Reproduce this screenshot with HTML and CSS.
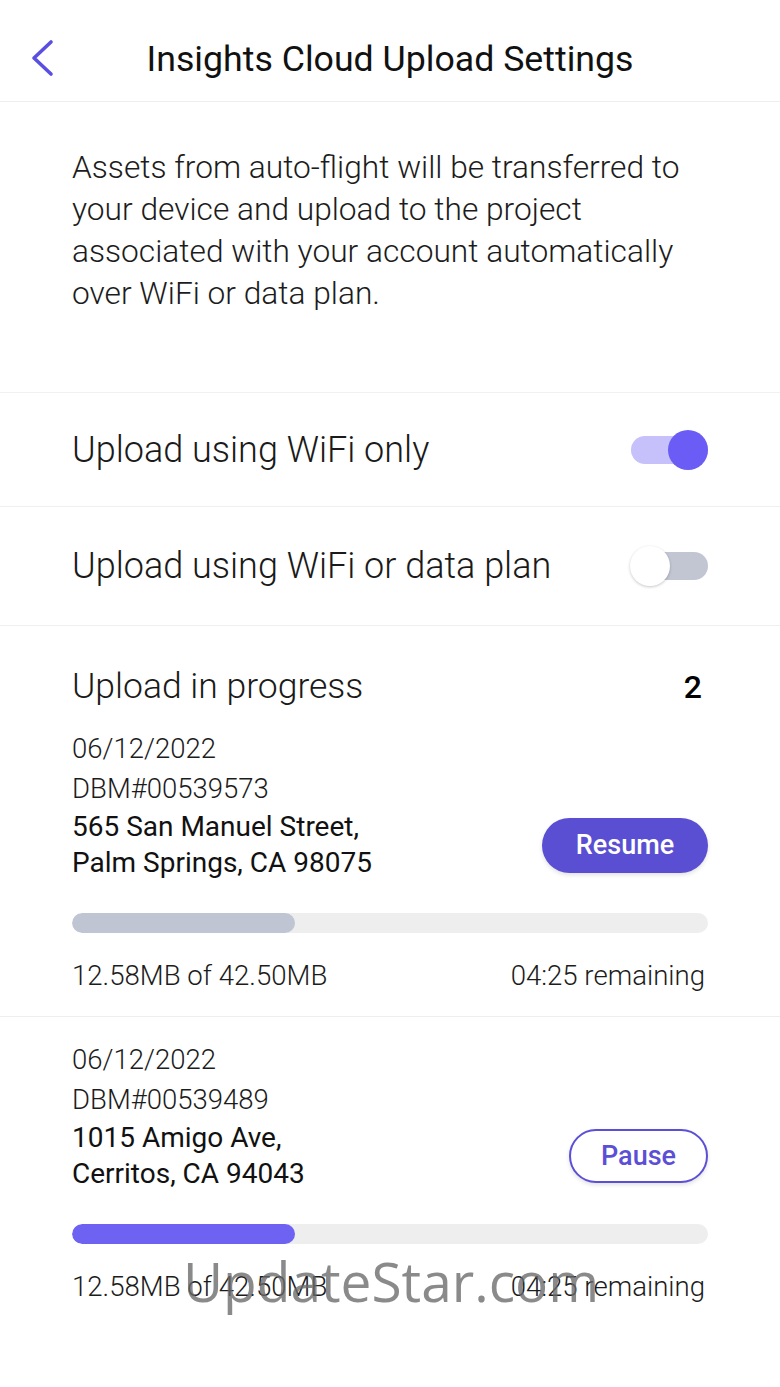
FILE: index.html
```html
<!doctype html>
<html lang="en">
<head>
    <meta charset="UTF-8">
    <title>Insights Cloud Upload Settings</title>
    <link rel="stylesheet" href="styles.css">
</head>
<body>
    <header class="topbar">
      <a class="back" href="#">
        <svg width="26" height="40" viewBox="0 0 26 40"><polyline points="21,4 4,20 21,36" fill="none" stroke="#5a4fe0" stroke-width="3.6" stroke-linecap="round" stroke-linejoin="round"/></svg>
      </a>
      <h1 class="title">Insights Cloud Upload Settings</h1>
      <span></span>
    </header>

    <section class="intro">
      <p>Assets from auto-flight will be transferred to your device and upload to the project associated with your account automatically over WiFi or data plan.</p>
    </section>

    <div class="setting-row">
      <span class="setting-label">Upload using WiFi only</span>
      <span class="switch on"><span class="knob"></span></span>
    </div>
    <div class="setting-row">
      <span class="setting-label">Upload using WiFi or data plan</span>
      <span class="switch"><span class="knob"></span></span>
    </div>

    <section class="uploads">
      <div class="uploads-head">
        <h2>Upload in progress</h2>
        <span class="count">2</span>
      </div>

      <div class="upload-item">
        <div class="meta">06/12/2022</div>
        <div class="meta">DBM#00539573</div>
        <div class="item-main">
          <div class="address">565 San Manuel Street,<br>Palm Springs, CA 98075</div>
          <button class="btn btn-solid">Resume</button>
        </div>
        <div class="bar"><div class="bar-fill paused" style="width: 35%"></div></div>
        <div class="stats"><span>12.58MB of 42.50MB</span><span>04:25 remaining</span></div>
      </div>

      <div class="upload-item">
        <div class="meta">06/12/2022</div>
        <div class="meta">DBM#00539489</div>
        <div class="item-main">
          <div class="address">1015 Amigo Ave,<br>Cerritos, CA 94043</div>
          <button class="btn btn-outline">Pause</button>
        </div>
        <div class="bar"><div class="bar-fill" style="width: 35%"></div></div>
        <div class="stats"><span>12.58MB of 42.50MB</span><span>04:25 remaining</span></div>
      </div>
    </section>

    <div class="watermark">UpdateStar.com</div>
</body>
</html>
```

FILE: styles.css
```css
body {
  margin: 0;
  background: #fff;
  color: #1a1a1a;
  font-family: Roboto, "Noto Sans", sans-serif;
  position: relative;
  min-height: 1387px;
}

/* header */
.topbar {
  display: grid;
  grid-template-columns: 1fr auto 1fr;
  align-items: start;
  height: 63px;
  padding-top: 38px;
  border-bottom: 1px solid #eeeeee;
}
.back {
  display: block;
  width: 26px;
  height: 40px;
  margin-left: 30px;
}
.back svg {
  display: block;
}
.title {
  margin: 0;
  font-size: 35.7px;
  font-weight: 400;
  line-height: 42px;
  color: #111;
}

/* intro text */
.intro {
  padding: 45px 72px 77px;
  border-bottom: 1px solid #f1f1f1;
}
.intro p {
  margin: 0;
  font-size: 31.7px;
  font-weight: 300;
  line-height: 42px;
  color: #1c1c1c;
}

/* toggles */
.setting-row {
  display: flex;
  align-items: center;
  justify-content: space-between;
  height: 113px;
  padding: 0 72px;
  border-bottom: 1px solid #efefef;
}
.setting-row + .setting-row {
  height: 118px;
}
.setting-label {
  font-size: 36px;
  font-weight: 300;
  line-height: 44px;
  color: #1a1a1a;
}
.switch {
  position: relative;
  width: 78px;
  height: 40px;
}
.switch::before {
  content: "";
  position: absolute;
  left: 1px;
  right: 0;
  top: 6px;
  height: 28px;
  border-radius: 14px;
  background: #c1c6d2;
}
.switch .knob {
  position: absolute;
  left: 0;
  top: 0;
  width: 40px;
  height: 40px;
  border-radius: 50%;
  background: #fff;
  box-shadow: 0 1px 3px rgba(0, 0, 0, 0.22);
}
.switch.on::before {
  background: #c6c0fb;
}
.switch.on .knob {
  left: auto;
  right: 0;
  background: #6a5cf4;
  box-shadow: none;
}

/* uploads */
.uploads {
  padding-top: 40px;
}
.uploads-head {
  display: flex;
  justify-content: space-between;
  align-items: baseline;
  padding: 0 78px 0 72px;
}
.uploads-head h2 {
  margin: 0;
  font-size: 35.5px;
  font-weight: 300;
  line-height: 40px;
}
.count {
  font-size: 32px;
  font-weight: 500;
  color: #000;
}
.upload-item {
  padding: 23px 72px 22px;
  border-bottom: 1px solid #eeeeee;
}
.upload-item:last-child {
  border-bottom: none;
}
.meta {
  font-size: 27.5px;
  font-weight: 300;
  line-height: 40px;
  color: #1c1c1c;
}
.item-main {
  display: flex;
  align-items: center;
  justify-content: space-between;
}
.address {
  font-size: 28px;
  font-weight: 400;
  line-height: 36px;
  color: #111;
}
.btn {
  height: 55px;
  border-radius: 28px;
  font-family: Roboto, sans-serif;
  font-size: 27px;
  font-weight: 500;
  box-shadow: 0 2px 4px rgba(0, 0, 0, 0.12);
}
.btn-solid {
  width: 166px;
  border: none;
  background: #5a4fd3;
  color: #fff;
}
.btn-outline {
  width: 139px;
  height: 54px;
  border: 2px solid #5b4fd6;
  background: #fff;
  color: #5b4fd6;
}
.bar {
  height: 20px;
  margin-top: 32px;
  border-radius: 10px;
  background: #eeeeee;
  overflow: hidden;
}
.bar-fill {
  height: 100%;
  border-radius: 10px;
  background: #6e62f3;
}
.bar-fill.paused {
  background: #bfc5d3;
}
.stats {
  display: flex;
  justify-content: space-between;
  margin-top: 25px;
  padding-right: 3px;
  font-size: 27.6px;
  font-weight: 300;
  line-height: 36px;
  color: #1c1c1c;
}

/* watermark over the screenshot */
.watermark {
  position: absolute;
  left: 183px;
  top: 1253px;
  font-family: "Open Sans", sans-serif;
  font-size: 55px;
  line-height: 56px;
  color: rgba(105, 105, 105, 0.78);
  pointer-events: none;
}
```
